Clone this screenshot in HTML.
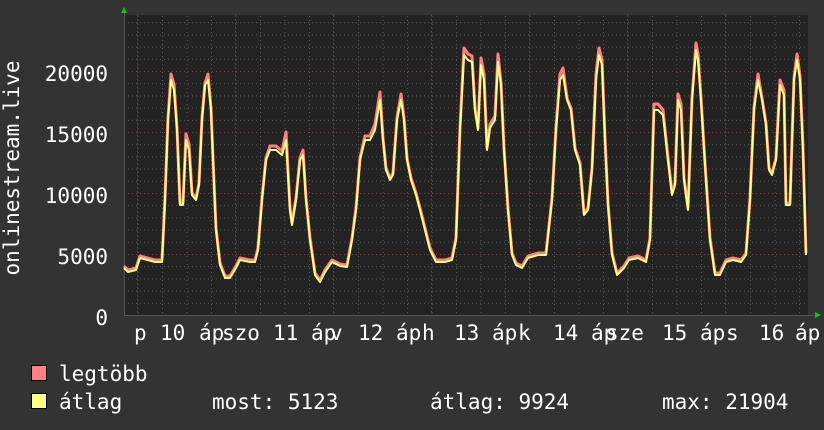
<!DOCTYPE html>
<html><head><meta charset="utf-8"><style>
html,body{margin:0;padding:0;background:#333333;}
svg{display:block;}
text{font-family:"DejaVu Sans Mono","Liberation Mono",monospace;fill:#ffffff;font-size:21px;}
</style></head><body>
<svg width="824" height="430" viewBox="0 0 824 430" xmlns="http://www.w3.org/2000/svg">
<defs>
<pattern id="hg" x="0" y="315" width="4" height="12.2" patternUnits="userSpaceOnUse">
<rect x="0" y="0" width="1" height="1" fill="#5a5a5a"/>
</pattern>
<pattern id="vg" x="137.5" y="0" width="24.5" height="4" patternUnits="userSpaceOnUse">
<rect x="0" y="0" width="1" height="1" fill="#5a5a5a"/>
</pattern>
</defs>
<rect x="124" y="15" width="684" height="300" fill="#232323"/>
<rect x="124" y="15" width="684" height="300" fill="url(#hg)"/>
<rect x="124" y="15" width="684" height="300" fill="url(#vg)"/>
<g stroke="#7a4040" stroke-width="1" stroke-dasharray="1,3">
<line x1="137.5" y1="15" x2="137.5" y2="315"/>
<line x1="235.5" y1="15" x2="235.5" y2="315"/>
<line x1="333.5" y1="15" x2="333.5" y2="315"/>
<line x1="431.5" y1="15" x2="431.5" y2="315"/>
<line x1="529.5" y1="15" x2="529.5" y2="315"/>
<line x1="627.5" y1="15" x2="627.5" y2="315"/>
<line x1="725.5" y1="15" x2="725.5" y2="315"/>
<line x1="124" y1="254.5" x2="808" y2="254.5"/>
<line x1="124" y1="193.5" x2="808" y2="193.5"/>
<line x1="124" y1="132.5" x2="808" y2="132.5"/>
<line x1="124" y1="71.5" x2="808" y2="71.5"/>
</g>
<line x1="124" y1="315.5" x2="816" y2="315.5" stroke="#555" stroke-width="1"/>
<line x1="124.5" y1="315" x2="124.5" y2="12" stroke="#555" stroke-width="1"/>
<polygon points="121,13 127,13 124,7" fill="#00cc00"/>
<polygon points="815,312 815,318 821,315" fill="#00cc00"/>
<g transform="translate(0,-2)">
<polyline fill="none" stroke="#ff8080" stroke-width="3" stroke-linejoin="round" points="124,268 128,272 136,270 140,258 155,262 162,262 165,200 168,120 171,76 174,86 177,130 180,205 183,205 186,136 189,146 192,195 196,200 199,185 202,120 205,85 208,76 211,110 213,160 216,230 220,265 225,278 230,278 236,268 240,260 250,262 255,262 258,250 262,200 266,160 270,148 276,148 282,153 286,134 290,210 292,225 296,200 300,160 303,152 306,200 310,240 315,275 320,282 325,272 332,262 340,266 347,267 352,240 356,210 360,160 365,138 370,138 375,126 380,94 383,140 386,170 390,180 393,175 397,120 401,96 404,120 407,160 411,180 416,195 420,210 425,230 430,250 436,262 445,262 452,260 456,240 460,130 464,50 468,56 472,58 475,110 478,130 481,60 484,76 487,150 490,126 495,118 498,56 501,85 504,150 508,210 512,255 516,265 522,268 528,258 538,255 546,255 552,200 556,130 560,76 563,70 567,100 571,110 575,150 580,165 584,215 588,210 592,170 596,76 599,50 602,62 605,140 608,205 612,255 617,275 624,268 629,260 638,258 646,262 650,240 654,106 658,106 663,112 668,160 672,195 675,185 678,96 681,106 684,180 688,210 692,100 696,45 698,56 701,100 705,165 710,240 715,275 720,275 726,262 733,260 741,262 746,255 750,200 754,110 758,76 762,100 766,125 769,170 772,175 776,160 780,82 784,92 786,205 790,205 794,80 797,56 800,78 803,150 806,255"/>
</g>
<polyline fill="none" stroke="#ffff80" stroke-width="2" stroke-linejoin="round" points="124,268 128,272 136,270 140,258 155,262 162,262 165,200 168,120 171,80 174,90 177,130 180,205 183,205 186,140 189,150 192,195 196,200 199,185 202,120 205,85 208,80 211,110 213,160 216,230 220,265 225,278 230,278 236,268 240,260 250,262 255,262 258,250 262,200 266,160 270,150 276,150 282,155 286,140 290,210 292,225 296,200 300,160 303,155 306,200 310,240 315,275 320,282 325,272 332,262 340,266 347,267 352,240 356,210 360,160 365,140 370,140 375,130 380,100 383,140 386,170 390,180 393,175 397,120 401,100 404,120 407,160 411,180 416,195 420,210 425,230 430,250 436,262 445,262 452,260 456,240 460,130 464,55 468,60 472,62 475,110 478,130 481,65 484,80 487,150 490,128 495,120 498,62 501,85 504,150 508,210 512,255 516,265 522,268 528,258 538,255 546,255 552,200 556,130 560,80 563,75 567,100 571,110 575,150 580,165 584,215 588,210 592,170 596,80 599,55 602,65 605,140 608,205 612,255 617,275 624,268 629,260 638,258 646,262 650,240 654,110 658,110 663,115 668,160 672,195 675,185 678,100 681,110 684,180 688,210 692,100 696,50 698,60 701,100 705,165 710,240 715,275 720,275 726,262 733,260 741,262 746,255 750,200 754,110 758,80 762,100 766,125 769,170 772,175 776,160 780,85 784,95 786,205 790,205 794,80 797,60 800,80 803,150 806,255"/>
<g text-anchor="end">
<text x="108" y="81">20000</text>
<text x="108" y="142">15000</text>
<text x="108" y="203">10000</text>
<text x="108" y="264">5000</text>
<text x="108" y="325">0</text>
</g>
<text transform="translate(19,168) rotate(-90)" text-anchor="middle">onlinestream.live</text>
<g>
<text x="134" y="340">p</text>
<text x="160" y="340">10</text>
<text x="199" y="340">áp</text>
<text x="222" y="340">szo</text>
<text x="273" y="340">11</text>
<text x="311" y="340">áp</text>
<text x="330" y="340">v</text>
<text x="358" y="340">12</text>
<text x="396" y="340">áp</text>
<text x="422" y="340">h</text>
<text x="454" y="340">13</text>
<text x="492" y="340">áp</text>
<text x="518" y="340">k</text>
<text x="553" y="340">14</text>
<text x="591" y="340">áp</text>
<text x="606" y="340">sze</text>
<text x="662" y="340">15</text>
<text x="700" y="340">áp</text>
<text x="726" y="340">s</text>
<text x="759" y="340">16</text>
<text x="795" y="340">áp</text>
</g>
<rect x="31.5" y="365.5" width="15" height="15" fill="#ff8080" stroke="#000" stroke-width="1"/>
<rect x="31.5" y="393.5" width="15" height="15" fill="#ffff80" stroke="#000" stroke-width="1"/>
<text x="59" y="381">legtöbb</text>
<text x="59" y="409">átlag</text>
<text x="212" y="409">most: 5123</text>
<text x="430" y="409">átlag: 9924</text>
<text x="662" y="409">max: 21904</text>
</svg>
</body></html>
